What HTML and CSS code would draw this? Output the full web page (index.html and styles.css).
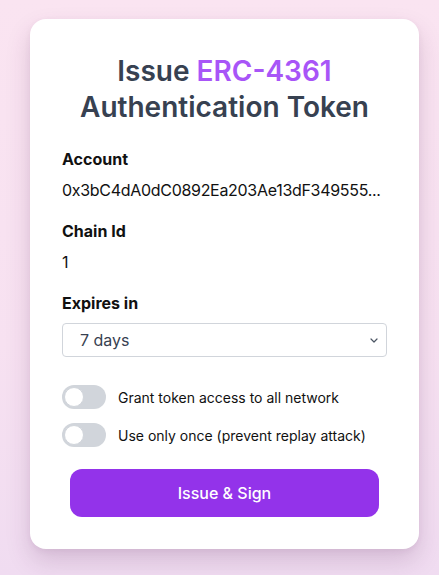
FILE: index.html
```html
<!DOCTYPE html>
<html lang="en">
<head>
<meta charset="utf-8">
<title>Issue ERC-4361 Authentication Token</title>
<link rel="stylesheet" href="styles.css">
</head>
<body>
<main class="page">
  <section class="card">
    <h1 class="title">Issue <span class="accent">ERC-4361</span><br>Authentication Token</h1>
    <div class="field">
      <div class="label">Account</div>
      <div class="value address">0x3bC4dA0dC0892Ea203Ae13dF349555...</div>
    </div>
    <div class="field">
      <div class="label">Chain Id</div>
      <div class="value">1</div>
    </div>
    <div class="field field-select">
      <div class="label">Expires in</div>
      <div class="select">
        <span>7 days</span>
        <svg class="chev" width="8" height="5" viewBox="0 0 8 5"><path d="M1 1l3 3 3-3" fill="none" stroke="#4b5563" stroke-width="1.2" stroke-linecap="round" stroke-linejoin="round"/></svg>
      </div>
    </div>
    <div class="toggles">
      <div class="toggle-row"><span class="switch"><span class="knob"></span></span><span class="toggle-text">Grant token access to all network</span></div>
      <div class="toggle-row"><span class="switch"><span class="knob"></span></span><span class="toggle-text">Use only once (prevent replay attack)</span></div>
    </div>
    <button class="btn">Issue &amp; Sign</button>
  </section>
</main>
</body>
</html>
```
FILE: styles.css
```css
* { box-sizing: border-box; }
html, body { margin: 0; padding: 0; }
body {
  width: 439px;
  height: 575px;
  overflow: hidden;
  font-family: Inter, "Noto Sans", sans-serif;
  background: linear-gradient(180deg, #fae4f1 0%, #f7e1f1 60%, #f0dcf1 100%);
}
.page {
  padding: 19px 20px 0 30px;
}
.card {
  width: 389px;
  background: #ffffff;
  border-radius: 16px;
  padding: 34px 32px 32px;
  box-shadow: 0 12px 24px rgba(90, 40, 90, 0.18), 0 2px 6px rgba(90, 40, 90, 0.06);
  display: flex;
  flex-direction: column;
}
.title {
  margin: 0 0 22px;
  text-align: center;
  font-size: 28px;
  line-height: 36px;
  font-weight: 600;
  color: #374151;
}
.accent { color: #a855f7; }
.field {
  display: flex;
  flex-direction: column;
  gap: 7px;
  margin-bottom: 17px;
}
.label {
  font-size: 16px;
  line-height: 24px;
  font-weight: 700;
  color: #111111;
}
.value {
  font-size: 16px;
  line-height: 24px;
  color: #111111;
  white-space: nowrap;
}
.address { letter-spacing: -0.3px; }
.field-select { gap: 8px; margin-bottom: 28px; }
.select {
  height: 34px;
  border: 1px solid #d1d5db;
  border-radius: 4px;
  display: flex;
  align-items: center;
  justify-content: space-between;
  padding: 0 8px 0 17px;
  font-size: 16px;
  color: #374151;
}
.toggles {
  display: flex;
  flex-direction: column;
  gap: 14px;
}
.toggle-row {
  display: flex;
  align-items: center;
  gap: 12px;
  font-size: 14px;
  color: #111111;
}
.switch {
  width: 44px;
  height: 24px;
  border-radius: 12px;
  background: #d1d5db;
  display: flex;
  align-items: center;
  padding: 2px;
}
.knob {
  width: 20px;
  height: 20px;
  border-radius: 50%;
  background: #ffffff;
  border: 1px solid #d1d5db;
}
.btn {
  margin: 22px 8px 0;
  height: 48px;
  border: none;
  border-radius: 12px;
  background: #9333ea;
  color: #ffffff;
  font-family: Inter, "Noto Sans", sans-serif;
  font-size: 16px;
  font-weight: 500;
}
```
